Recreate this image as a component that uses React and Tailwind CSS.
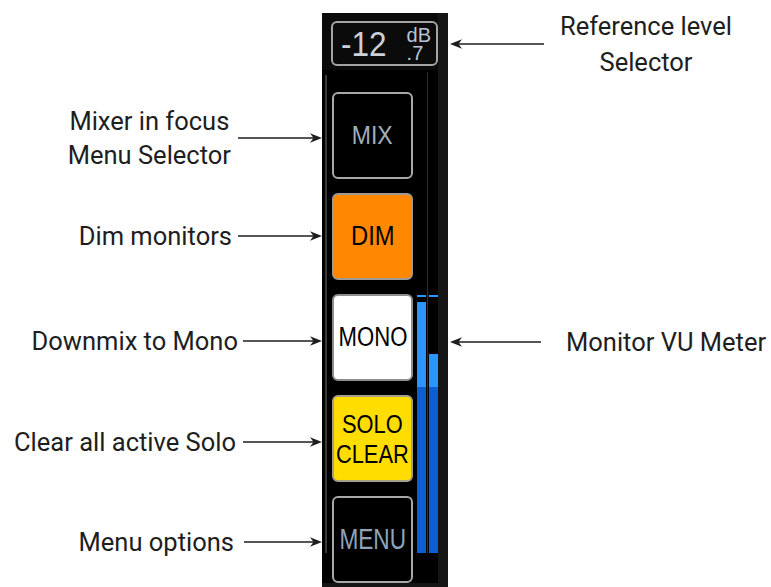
const INK = "#1e1e1e";

function ArrowRight({ w }) {
  return (
    <svg width={w} height="12" viewBox={`0 0 ${w} 12`} className="shrink-0">
      <line x1="0" y1="6" x2={w - 6} y2="6" stroke={INK} strokeWidth="1.6" />
      <path d={`M${w} 6 L${w - 12} 1.2 L${w - 8.5} 6 L${w - 12} 10.8 Z`} fill={INK} />
    </svg>
  );
}

function ArrowLeft({ w }) {
  return (
    <svg width={w} height="12" viewBox={`0 0 ${w} 12`} className="shrink-0">
      <line x1="6" y1="6" x2={w} y2="6" stroke={INK} strokeWidth="1.6" />
      <path d="M0 6 L12 1.2 L8.5 6 L12 10.8 Z" fill={INK} />
    </svg>
  );
}

const leftNotes = [
  { lines: ["Mixer in focus", "Menu Selector"], row: "mt-[104px] h-[68px]", gap: "ml-[7px]", w: 84 },
  { lines: ["Dim monitors"], row: "mt-[47px] h-[34px]", gap: "ml-[6px]", w: 84 },
  { lines: ["Downmix to Mono"], row: "mt-[71px] h-[34px]", gap: "ml-[5px]", w: 79 },
  { lines: ["Clear all active Solo"], row: "mt-[67px] h-[34px]", gap: "ml-[7px]", w: 79 },
  { lines: ["Menu options"], row: "mt-[66px] h-[34px]", gap: "ml-[10px]", w: 78 },
];

function Btn({ className, children }) {
  return (
    <div className={`h-[87px] w-[81px] rounded-[6px] border-2 flex flex-col items-center justify-center ${className}`}>
      {children}
    </div>
  );
}

function Channel({ barTop, light }) {
  return (
    <div className="w-[9px] h-[481px] flex flex-col">
      <div className="mt-[223px] h-[2px] bg-[#2b95ff]" />
      <div className={barTop} />
      <div className={`${light} bg-[#2b95ff]`} />
      <div className="h-[166px] bg-[#0c5fd3]" />
    </div>
  );
}

export default function App() {
  return (
    <div className="w-[771px] h-[587px] bg-white flex overflow-hidden font-['Roboto',sans-serif] text-[25.5px] text-[#1e1e1e]">
      {/* left notes */}
      <div className="w-[322px] flex flex-col shrink-0">
        {leftNotes.map((n) => (
          <div key={n.lines[0]} className={`flex items-center justify-end ${n.row}`}>
            <div className="text-center leading-[34px] whitespace-nowrap">
              {n.lines.map((l) => (
                <div key={l}>{l}</div>
              ))}
            </div>
            <div className={n.gap}>
              <ArrowRight w={n.w} />
            </div>
          </div>
        ))}
      </div>

      {/* monitor strip */}
      <div className="mt-[13px] h-[574px] w-[126px] shrink-0 bg-[#151515] flex flex-col font-['Liberation_Sans',Arial,sans-serif]">
        <div className="h-[57px] w-[116px] bg-[#0b0b0b] pl-[9px] pt-[8px]">
          <div className="h-[45px] w-[107px] rounded-[6px] border-2 border-[#a4a4a4] flex items-center pl-[8px]">
            <span className="inline-block origin-left text-[35px] leading-[35px] scale-x-[0.9] text-[#ccd1d7]">-12</span>
            <div className="ml-[15px] mt-[1px] flex flex-col text-[20px] leading-[18px] text-[#b8c5d4]">
              <span>dB</span>
              <span>.7</span>
            </div>
          </div>
        </div>
        <div className="h-[513px] w-[116px] bg-black flex items-start">
          <div className="ml-[3px] mt-[5px] w-[2px] h-[478px] bg-[#3a3a3a]" />
          <div className="ml-[5px] mt-[22px] flex flex-col gap-[14px]">
            <Btn className="bg-black border-[#a8a8a8]">
              <span className="inline-block text-[25px] scale-x-[0.92] text-[#a2aebb]">MIX</span>
            </Btn>
            <Btn className="bg-[#ff8800] border-[#a09a94]">
              <span className="inline-block text-[27px] scale-x-[0.88] text-black">DIM</span>
            </Btn>
            <Btn className="bg-white border-[#8e8e8e]">
              <span className="inline-block text-[27px] scale-x-[0.82] text-black">MONO</span>
            </Btn>
            <Btn className="bg-[#ffdd00] border-[#a4a08a]">
              <span className="inline-block text-[26px] leading-[30px] scale-x-[0.84] text-black text-center">
                SOLO
                <br />
                CLEAR
              </span>
            </Btn>
            <Btn className="bg-black border-[#a8a8a8]">
              <span className="inline-block text-[29px] scale-x-[0.78] text-[#8ea4bc]">MENU</span>
            </Btn>
          </div>
          <div className="ml-[4px] mt-[2px] flex">
            <Channel barTop="h-[5px]" light="h-[85px]" />
            <div className="ml-[1px] w-[1px] h-[481px] bg-[#2e2e2e]" />
            <div className="ml-[1px]">
              <Channel barTop="h-[57px]" light="h-[33px]" />
            </div>
          </div>
        </div>
      </div>

      {/* right notes */}
      <div className="flex flex-col ml-[2px]">
        <div className="mt-[8px] h-[72px] flex items-center">
          <ArrowLeft w={94} />
          <div className="ml-[16px] text-center leading-[36px] whitespace-nowrap">
            <div>Reference level</div>
            <div>Selector</div>
          </div>
        </div>
        <div className="mt-[245px] h-[34px] flex items-center">
          <ArrowLeft w={91} />
          <div className="ml-[25px] leading-[34px] whitespace-nowrap">Monitor VU Meter</div>
        </div>
      </div>
    </div>
  );
}
